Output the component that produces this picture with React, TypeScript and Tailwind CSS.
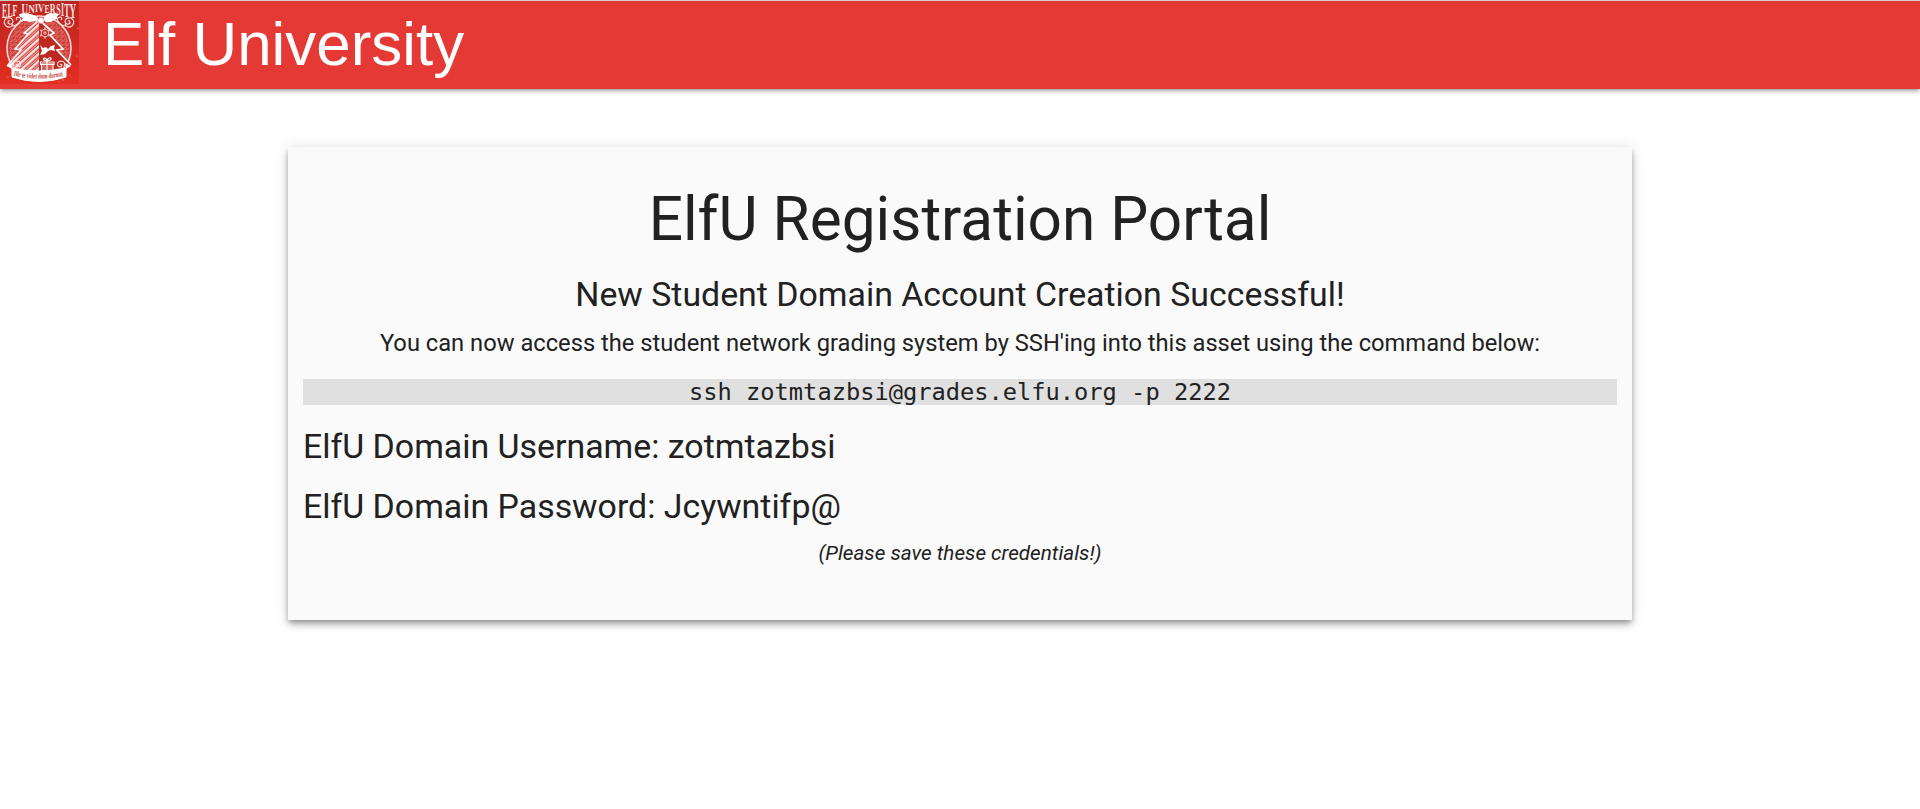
type Glyph = { ch: string; x: number; w: number; h: number };

const arch: Glyph[] = [
  { ch: 'E', x: 2, w: 5.2, h: 14 },
  { ch: 'L', x: 7.4, w: 5, h: 13 },
  { ch: 'F', x: 12.6, w: 4.8, h: 11.5 },
  { ch: 'U', x: 21.6, w: 6.4, h: 9.6 },
  { ch: 'N', x: 28.2, w: 6.6, h: 8.8 },
  { ch: 'I', x: 35, w: 3, h: 8.2 },
  { ch: 'V', x: 38, w: 6.2, h: 8 },
  { ch: 'E', x: 44.4, w: 5, h: 8.4 },
  { ch: 'R', x: 49.8, w: 6, h: 9.6 },
  { ch: 'S', x: 56.2, w: 4.4, h: 10.8 },
  { ch: 'I', x: 61, w: 3, h: 12 },
  { ch: 'T', x: 64.2, w: 5.4, h: 13 },
  { ch: 'Y', x: 69.6, w: 6.6, h: 14 },
];

const natural: Record<string, number> = {
  E: 6.67, L: 6.67, F: 6.11, U: 7.22, N: 7.22, I: 3.89, V: 7.22, R: 7.22, S: 5.56, T: 6.67, Y: 7.22,
};

function Crest() {
  return (
    <svg width="79" height="83" viewBox="0 1 79 83" className="block shrink-0 overflow-visible" aria-hidden="true">
      <defs>
        <linearGradient id="crestBg" x1="0" y1="0" x2="0" y2="1">
          <stop offset="0" stopColor="#b9251f" />
          <stop offset="0.5" stopColor="#cf2a22" />
          <stop offset="1" stopColor="#e42d21" />
        </linearGradient>
        <pattern id="stripes" width="5.4" height="5.4" patternUnits="userSpaceOnUse" patternTransform="rotate(-42)">
          <rect width="5.4" height="5.4" fill="#d5453e" />
          <rect width="5.4" height="2.3" fill="#fff" fillOpacity="0.88" />
          <rect y="3.5" width="5.4" height="0.9" fill="#f0aaa6" />
        </pattern>
        <pattern id="frost" width="4.6" height="4.2" patternUnits="userSpaceOnUse">
          <path d="M0 2q1.100-2 2.300 0t2.300 0M1 4q1-1.400 2 0" fill="none" stroke="#e79894" strokeWidth="0.8" />
        </pattern>
      </defs>
      <rect y="1" width="79" height="83" fill="url(#crestBg)" />

      <circle cx="39" cy="48" r="32" fill="#cf3a33" />
      <circle cx="39" cy="48" r="30" fill="url(#frost)" />
      <circle cx="39" cy="48" r="32" fill="none" stroke="#f8d9d7" strokeWidth="1.6" />

      <path d="M39 20 24 33l4 1-13 15 6 1L7 66l32 7Z" fill="url(#stripes)" />
      <path d="M39 20 24 33l4 1-13 15 6 1L7 66" fill="none" stroke="#fff" strokeWidth="1.4" />
      <path d="M39 20 54 33l-4 2 13 14-6 1 14 15-32 8Z" fill="#bd2821" />
      <path d="M39 20 54 33l-4 2 13 14-6 1 14 15" fill="none" stroke="#fff" strokeWidth="1.7" />

      <g fill="none" stroke="#f0b1ad" strokeWidth="1.2">
        <circle cx="45" cy="33" r="3.7" />
        <circle cx="45" cy="33" r="1.2" />
        <path d="M45 27.5v2M45 36.5v2M40.2 30.2l1.7 1M48.1 34.8l1.7 1M40.2 35.8l1.7-1M48.1 31.2l1.7-1" strokeWidth="2" />
      </g>

      <path d="M40 45l3 3 3-1 2 2 3-3 4-1-1 3 1 3-4-1-3 1-3 3-5 1 2-4Z" fill="#fff" />

      <g stroke="#fff" strokeWidth="1.1">
        <path d="M41.5 64h11.5v7H41.5Z" fill="#d2635d" />
        <path d="M40.5 62h13.5v2.5H40.5ZM47 61v10" fill="none" />
        <path d="M47 61q-5-1-3-3 3 0 3 3 1-4 4-3 1 2-4 3Z" fill="none" />
      </g>
      <g fill="none" stroke="#fbe6e5" strokeWidth="1.1">
        <path d="M14 67q-2-6 3-6 5 1 3 5-3 2-4-1l2-1" />
        <path d="M64 67q2-6-3-6-5 1-3 5 3 2 4-1l-2-1" />
        <path d="M13 24q-2 5-7 2-4-5 1-8 6-1 6 4-2 4-5 1 0-3 2-2M12 26q5 0 8-5 2-3-2-4-3 1-1 3" />
        <path d="M65 24q2 5 7 2 4-5-1-8-6-1-6 4 2 4 5 1 0-3-2-2M66 26q-5 0-8-5-2-3 2-4 3 1 1 3" />
      </g>

      <g fill="#fbe3e1" fontFamily="Liberation Serif, serif" fontWeight="700" fontSize="10">
        {arch.map((g, i) => (
          <text key={i} transform={`translate(${g.x} ${4.2 + g.h}) scale(${g.w / natural[g.ch]} ${g.h / 6.6})`}>
            {g.ch}
          </text>
        ))}
      </g>

      <path d="M19 14q2 0 4-1 2 1 4 0 4 1 9 3l3 3-2 2-7 1-4-1-5 0 2-3-3-1ZM59 14q-2 0-4-1-3 1-5 0-4 1-6 4l-1 3 3 2 5 0 3-2 3-1 0-2Z" fill="#fff" />
      <circle cx="41" cy="20.5" r="3.2" fill="#fff" stroke="#cc403a" strokeWidth="0.5" />

      <path d="M7 66l6-3-1 6ZM71 66l-6-3 1 6Z" fill="#fff" />
      <path d="M12 68q27 6 54 0v9q-27 9-54 0Z" fill="#fff" stroke="#fff" strokeLinejoin="round" />
      <path id="mottoPath" d="M13.5 75.7Q39 81.400 65 75.7" fill="none" />
      <text fill="#c4453f" fontFamily="Liberation Serif, serif" fontWeight="700" fontSize="7.5">
        <textPath href="#mottoPath" textLength="50" lengthAdjust="spacingAndGlyphs">
          Ille te videt dum dormit
        </textPath>
      </text>
      <g fill="#f29a90">
        <circle cx="3" cy="24" r="0.8" fill="#d8219b" />
        <circle cx="78" cy="28" r="0.6" />
        <circle cx="77" cy="56" r="0.6" />
        <circle cx="8" cy="77" r="0.6" />
        <circle cx="63" cy="80" r="0.7" />
        <circle cx="70" cy="75" r="0.5" />
        <circle cx="59" cy="82" r="0.6" />
      </g>
    </svg>
  );
}

export default function App() {
  return (
    <div className="min-h-screen bg-white font-[Roboto,sans-serif] text-[#212121]">
      <nav className="flex h-[89px] items-start border-t border-[#cfcfcf] bg-[#e53935] shadow-[0_3px_3px_0_rgba(0,0,0,0.14),0_4px_1px_-3px_rgba(0,0,0,0.12),0_1px_7px_0_rgba(0,0,0,0.2)]">
        <Crest />
        <span className="ml-6 font-['Liberation_Sans',Arial,sans-serif] text-[61.92px] leading-[86px] whitespace-nowrap text-white">
          Elf University
        </span>
      </nav>
      <main className="mx-auto mt-[58px] flex h-[473px] w-[1344px] flex-col bg-[#fafafa] px-[15px] pt-[43px] shadow-[0_5.500px_7px_0_rgba(0,0,0,0.14),0_1px_14px_0_rgba(0,0,0,0.12),0_3px_5.500px_-1px_rgba(0,0,0,0.3)]">
        <h1 className="text-center text-[60.3px] leading-[60px]">ElfU Registration Portal</h1>
        <h2 className="mt-[28px] text-center text-[33.86px] leading-[34px]">
          New Student Domain Account Creation Successful!
        </h2>
        <p className="mt-[17px] text-center text-[23.71px] leading-[28px]">
          You can now access the student network grading system by SSH'ing into this asset using the command below:
        </p>
        <code className="mt-[22px] block bg-[#e0e0e0] text-center font-['DejaVu_Sans_Mono',monospace] text-[23.7px] leading-[26px]">
          ssh zotmtazbsi@grades.elfu.org -p 2222
        </code>
        <h3 className="mt-[25px] text-[33.86px] leading-[34px]">ElfU Domain Username: zotmtazbsi</h3>
        <h3 className="mt-[26px] text-[33.86px] leading-[34px]">ElfU Domain Password: Jcywntifp@</h3>
        <p className="mt-[17px] text-center text-[20.68px] leading-[24px] italic">(Please save these credentials!)</p>
      </main>
    </div>
  );
}
